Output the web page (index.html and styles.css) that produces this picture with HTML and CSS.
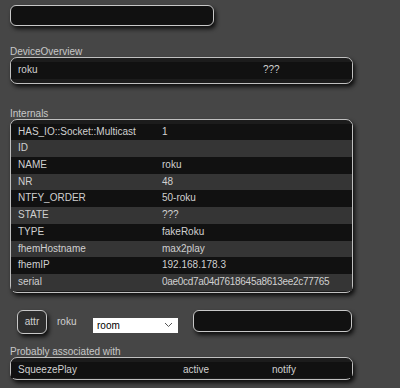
FILE: index.html
```html
<html>
<head>
<title>roku</title>
<link rel="stylesheet" href="styles.css">
</head>
<body>
<div class="content">
<div class="cmdbox"></div>

<div class="caption">DeviceOverview</div>
<div class="block overview">
<div class="row odd"><div class="col1 wide">roku</div><div class="col2">???</div></div>
</div>

<div class="caption internals-cap">Internals</div>
<div class="block internals">
<div class="row odd"><div class="col1">HAS_IO::Socket::Multicast</div><div class="col2">1</div></div>
<div class="row even"><div class="col1">ID</div><div class="col2"></div></div>
<div class="row odd"><div class="col1">NAME</div><div class="col2">roku</div></div>
<div class="row even"><div class="col1">NR</div><div class="col2">48</div></div>
<div class="row odd"><div class="col1">NTFY_ORDER</div><div class="col2">50-roku</div></div>
<div class="row even"><div class="col1">STATE</div><div class="col2">???</div></div>
<div class="row odd"><div class="col1">TYPE</div><div class="col2">fakeRoku</div></div>
<div class="row even"><div class="col1">fhemHostname</div><div class="col2">max2play</div></div>
<div class="row odd"><div class="col1">fhemIP</div><div class="col2">192.168.178.3</div></div>
<div class="row even"><div class="col1">serial</div><div class="col2 serial">0ae0cd7a04d7618645a8613ee2c77765</div></div>
</div>

<div class="attrline">
<button class="attrbtn">attr</button>
<span class="devname">roku</span>
<div class="select">room<svg width="9" height="6" viewBox="0 0 9 6"><path d="M1 1 L4.5 4.5 L8 1" fill="none" stroke="#555" stroke-width="1"/></svg></div>
<div class="attrval"></div>
</div>

<div class="caption assoc-cap">Probably associated with</div>
<div class="block assoc">
<div class="row odd"><div class="col1 dev">SqueezePlay</div><div class="col2 short">active</div><div class="col3">notify</div></div>
</div>
</div>
</body>
</html>
```

FILE: styles.css
```css
body {
	margin:0;
	background-color:#464646;
	font-family:'Liberation Sans',Arial,sans-serif;
	font-size:10px;
	color:#d0d0d0;
}
.content {
	padding-left:10px;
	padding-top:5px;
	width:343px;
}
.cmdbox {
	box-sizing:border-box;
	width:204px;
	height:21px;
	background-color:#111;
	border:1px solid #c8c8c8;
	border-radius:6px;
	box-shadow:2px 3px 4px rgba(0,0,0,.8);
}
.caption {
	height:11px;
	line-height:11px;
	margin-top:20px;
	color:#c8c8c8;
}
.internals-cap {
	margin-top:24px;
}
.assoc-cap {
	margin-top:12px;
}
.block {
	box-sizing:border-box;
	width:343px;
	background-color:#1c1c1c;
	border:1px solid #c0c0c0;
	border-radius:7px;
	box-shadow:2px 3px 4px rgba(0,0,0,.8);
	padding:4px 0 1px 0;
}
.overview {
	padding:4px 0 4px 0;
}
.row {
	display:flex;
	height:16.7px;
	line-height:16.7px;
}
.odd {
	background-color:#111;
}
.even {
	background-color:#353535;
}
.col1 {
	width:144px;
	padding-left:7px;
}
.col1.wide {
	width:245px;
}
.col1.dev {
	width:165px;
}
.col2.short {
	width:89px;
}
.serial {
	letter-spacing:-0.3px;
}
.attrline {
	display:flex;
	align-items:center;
	margin-top:17px;
	height:24px;
}
.attrbtn {
	box-sizing:border-box;
	width:30px;
	height:24px;
	margin-left:7px;
	padding:0;
	font-family:'Liberation Sans',Arial,sans-serif;
	font-size:10px;
	color:#d0d0d0;
	background-color:#2e2e2e;
	border:1px solid #c8c8c8;
	border-radius:6px;
	box-shadow:2px 3px 4px rgba(0,0,0,.8);
}
.devname {
	margin-left:10px;
	width:36px;
}
.select {
	box-sizing:border-box;
	width:85px;
	height:15px;
	background-color:#fff;
	color:#000;
	padding:0 5px 0 4px;
	display:flex;
	justify-content:space-between;
	align-items:center;
	font-size:10px;
	margin-top:7px;
}
.attrval {
	box-sizing:border-box;
	width:159px;
	height:22px;
	margin-left:15px;
	background-color:#111;
	border:1px solid #c8c8c8;
	border-radius:6px;
	box-shadow:2px 3px 4px rgba(0,0,0,.8);
	margin-top:-2px;
}
```
